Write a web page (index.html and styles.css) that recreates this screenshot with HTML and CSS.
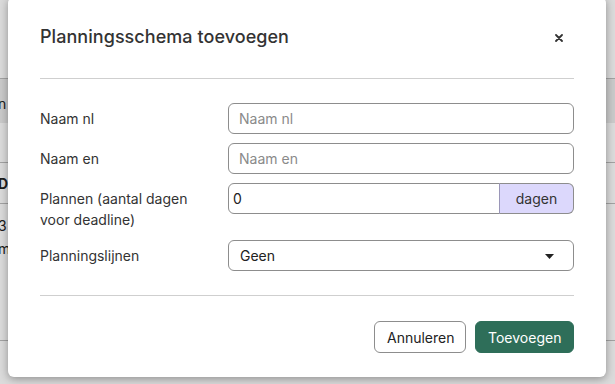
FILE: index.html
```html
<!DOCTYPE html>
<html lang="nl">
<head>
<meta charset="utf-8">
<title>Planningsschema toevoegen</title>
<link rel="stylesheet" href="styles.css">
</head>
<body>
<div class="page">
  <div class="pg-row pg-top"></div>
  <div class="pg-row pg-band"><span>n</span></div>
  <div class="pg-row pg-gap"></div>
  <div class="pg-row pg-head"><span>D</span></div>
  <div class="pg-row pg-body"><span>3</span><span>m</span></div>
</div>
<div class="backdrop"></div>
<div class="modal" role="dialog">
  <div class="modal-header">
    <h2 class="modal-title">Planningsschema toevoegen</h2>
    <button class="close" aria-label="Sluiten">
      <svg width="8" height="8" viewBox="0 0 8 8"><path d="M1 1L7 7M7 1L1 7" stroke="#333" stroke-width="1.8" stroke-linecap="round"/></svg>
    </button>
  </div>
  <div class="modal-body">
    <div class="form-row">
      <label class="label">Naam nl</label>
      <input class="input" placeholder="Naam nl">
    </div>
    <div class="form-row">
      <label class="label">Naam en</label>
      <input class="input" placeholder="Naam en">
    </div>
    <div class="form-row tall">
      <label class="label">Plannen (aantal dagen<br>voor deadline)</label>
      <div class="group">
        <input class="input grp-input" value="0">
        <span class="addon">dagen</span>
      </div>
    </div>
    <div class="form-row">
      <label class="label">Planningslijnen</label>
      <div class="select">
        <span>Geen</span>
        <svg width="9" height="5" viewBox="0 0 9 5"><path d="M0 0H9L4.5 5Z" fill="#222"/></svg>
      </div>
    </div>
  </div>
  <div class="modal-footer">
    <button class="btn btn-outline">Annuleren</button>
    <button class="btn btn-primary">Toevoegen</button>
  </div>
</div>
</body>
</html>
```
FILE: styles.css
```css
html, body {
  margin: 0;
  padding: 0;
}
body {
  width: 615px;
  height: 384px;
  overflow: hidden;
  position: relative;
  background: #ffffff;
  font-family: Inter, "Noto Sans", "Liberation Sans", sans-serif;
  color: #333;
}
.page {
  display: flex;
  flex-direction: column;
  font-size: 14px;
  color: #222;
}
.pg-row {
  border-bottom: 1px solid #bdbdbd;
}
.pg-top { height: 78px; }
.pg-band { background: #ececec; border-bottom: none; padding-top: 16px; height: 28px; }
.pg-gap { height: 39px; }
.pg-head { height: 40px; font-weight: 700; display: flex; align-items: center; }
.pg-body { height: 126px; display: flex; flex-direction: column; padding-top: 10px; line-height: 23px; }
.pg-row span { margin-left: -2px; }
.backdrop {
  position: absolute;
  inset: 0;
  background: rgba(0, 0, 0, 0.14);
}
.modal {
  position: absolute;
  left: 8px;
  top: -3px;
  width: 598px;
  height: 380px;
  box-sizing: border-box;
  background: #fff;
  border-radius: 6px;
  box-shadow: 0 2px 8px rgba(0, 0, 0, 0.35);
  padding: 0 32px;
  display: flex;
  flex-direction: column;
}
.modal-header {
  height: 82px;
  box-sizing: border-box;
  border-bottom: 1px solid #cfcfcf;
  display: flex;
  align-items: center;
  justify-content: space-between;
  padding-bottom: 3px;
}
.modal-title {
  margin: 0;
  font-size: 18px;
  font-weight: 500;
  color: #333;
  letter-spacing: 0.05px;
}
.close {
  border: none;
  background: none;
  padding: 0;
  margin-right: 11px;
  margin-top: 3px;
  display: flex;
}
.modal-body {
  padding: 24px 0 24px;
  border-bottom: 1px solid #cfcfcf;
  display: flex;
  flex-direction: column;
  gap: 9px;
}
.form-row {
  display: grid;
  grid-template-columns: 188px 1fr;
  align-items: start;
}
.form-row.tall { min-height: 48px; }
.label {
  font-size: 14px;
  line-height: 21px;
  color: #333;
  padding-top: 5px;
}
.input {
  height: 31px;
  box-sizing: border-box;
  border: 1px solid #8d8d8d;
  border-radius: 6px;
  padding: 0 10px;
  font: inherit;
  font-size: 14px;
  color: #222;
  outline: none;
  width: 100%;
}
.input::placeholder { color: #8a8a8a; }
.group {
  display: flex;
  height: 31px;
}
.grp-input {
  flex: 1;
  border-top-right-radius: 0;
  border-bottom-right-radius: 0;
  padding-left: 4px;
}
.addon {
  width: 75px;
  box-sizing: border-box;
  background: #dcd8fc;
  border: 1px solid #8d8d8d;
  border-left-color: #9a96b8;
  margin-left: -1px;
  border-radius: 0 6px 6px 0;
  display: flex;
  align-items: center;
  justify-content: center;
  font-size: 14px;
  color: #333;
}
.select {
  height: 31px;
  box-sizing: border-box;
  border: 1px solid #8d8d8d;
  border-radius: 6px;
  display: flex;
  align-items: center;
  justify-content: space-between;
  padding: 0 19px 0 11px;
  font-size: 14px;
  color: #222;
}
.select svg { margin-top: 2px; }
.modal-footer {
  display: flex;
  justify-content: flex-end;
  gap: 9px;
  padding-top: 25px;
}
.btn {
  height: 32px;
  box-sizing: border-box;
  border-radius: 6px;
  font: inherit;
  font-size: 14px;
  padding: 0 12px;
  cursor: pointer;
}
.btn-outline {
  background: #fff;
  border: 1px solid #8d8d8d;
  color: #222;
  width: 92px;
}
.btn-primary {
  background: #2e6e59;
  border: 1px solid #2e6e59;
  color: #fff;
  width: 99px;
}
```
